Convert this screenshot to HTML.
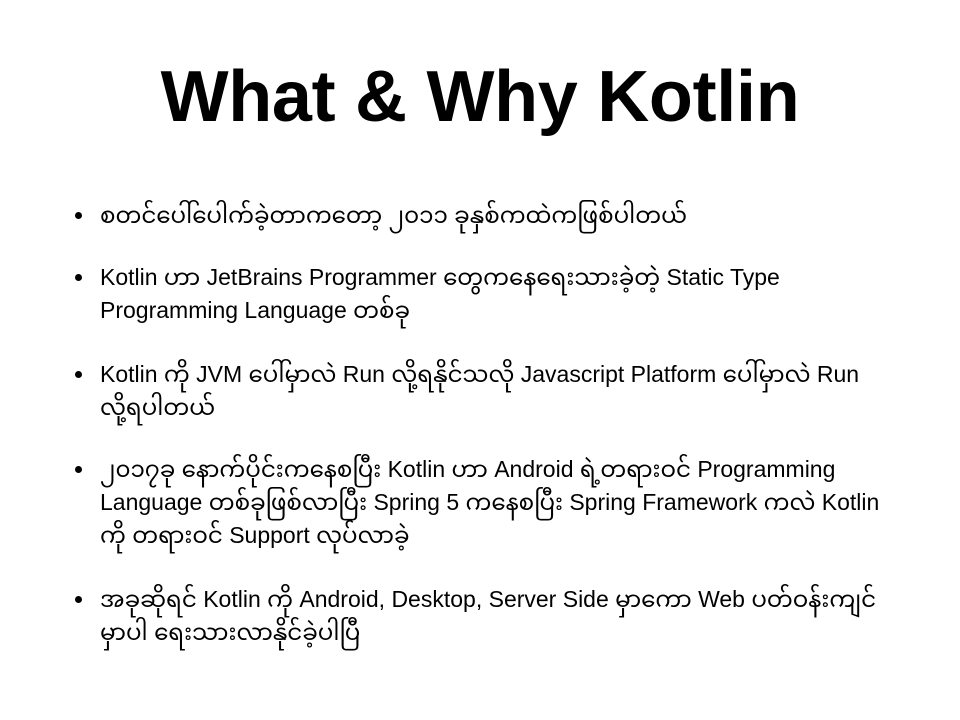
<!DOCTYPE html>
<html><head><meta charset="utf-8"><style>
html,body{margin:0;padding:0;background:#fff;}
body{width:960px;height:720px;position:relative;overflow:hidden;font-family:"Liberation Sans","Noto Sans Myanmar","Padauk",sans-serif;color:#000;}
h1{position:absolute;left:0;width:960px;top:52px;margin:0;text-align:center;font-size:72px;font-weight:bold;letter-spacing:-0.3px;line-height:90px;}
.l{position:absolute;left:100px;font-size:23px;line-height:30px;white-space:nowrap;letter-spacing:0px;}
.b{position:absolute;left:75px;width:7px;height:7px;border-radius:50%;background:#000;}
</style></head><body>
<h1>What &amp; Why Kotlin</h1>
<div class="b" style="top:212px"></div>
<div class="l" style="top:200px">စတင်ပေါ်ပေါက်ခဲ့တာကတော့ ၂၀၁၁ ခုနှစ်ကထဲကဖြစ်ပါတယ်</div>
<div class="b" style="top:274px"></div>
<div class="l" style="top:262px">Kotlin ဟာ JetBrains Programmer တွေကနေရေးသားခဲ့တဲ့ Static Type</div>
<div class="l" style="top:295px">Programming Language တစ်ခု</div>
<div class="b" style="top:371px"></div>
<div class="l" style="top:359px">Kotlin ကို JVM ပေါ်မှာလဲ Run လို့ရနိုင်သလို Javascript Platform ပေါ်မှာလဲ Run</div>
<div class="l" style="top:392px">လို့ရပါတယ်</div>
<div class="b" style="top:466px"></div>
<div class="l" style="top:454px">၂၀၁၇ခု နောက်ပိုင်းကနေစပြီး Kotlin ဟာ Android ရဲ့တရားဝင် Programming</div>
<div class="l" style="top:487px">Language တစ်ခုဖြစ်လာပြီး Spring 5 ကနေစပြီး Spring Framework ကလဲ Kotlin</div>
<div class="l" style="top:520px">ကို တရားဝင် Support လုပ်လာခဲ့</div>
<div class="b" style="top:596px"></div>
<div class="l" style="top:584px">အခုဆိုရင် Kotlin ကို Android, Desktop, Server Side မှာကော Web ပတ်ဝန်းကျင်</div>
<div class="l" style="top:617px">မှာပါ ရေးသားလာနိုင်ခဲ့ပါပြီ</div>
</body></html>
